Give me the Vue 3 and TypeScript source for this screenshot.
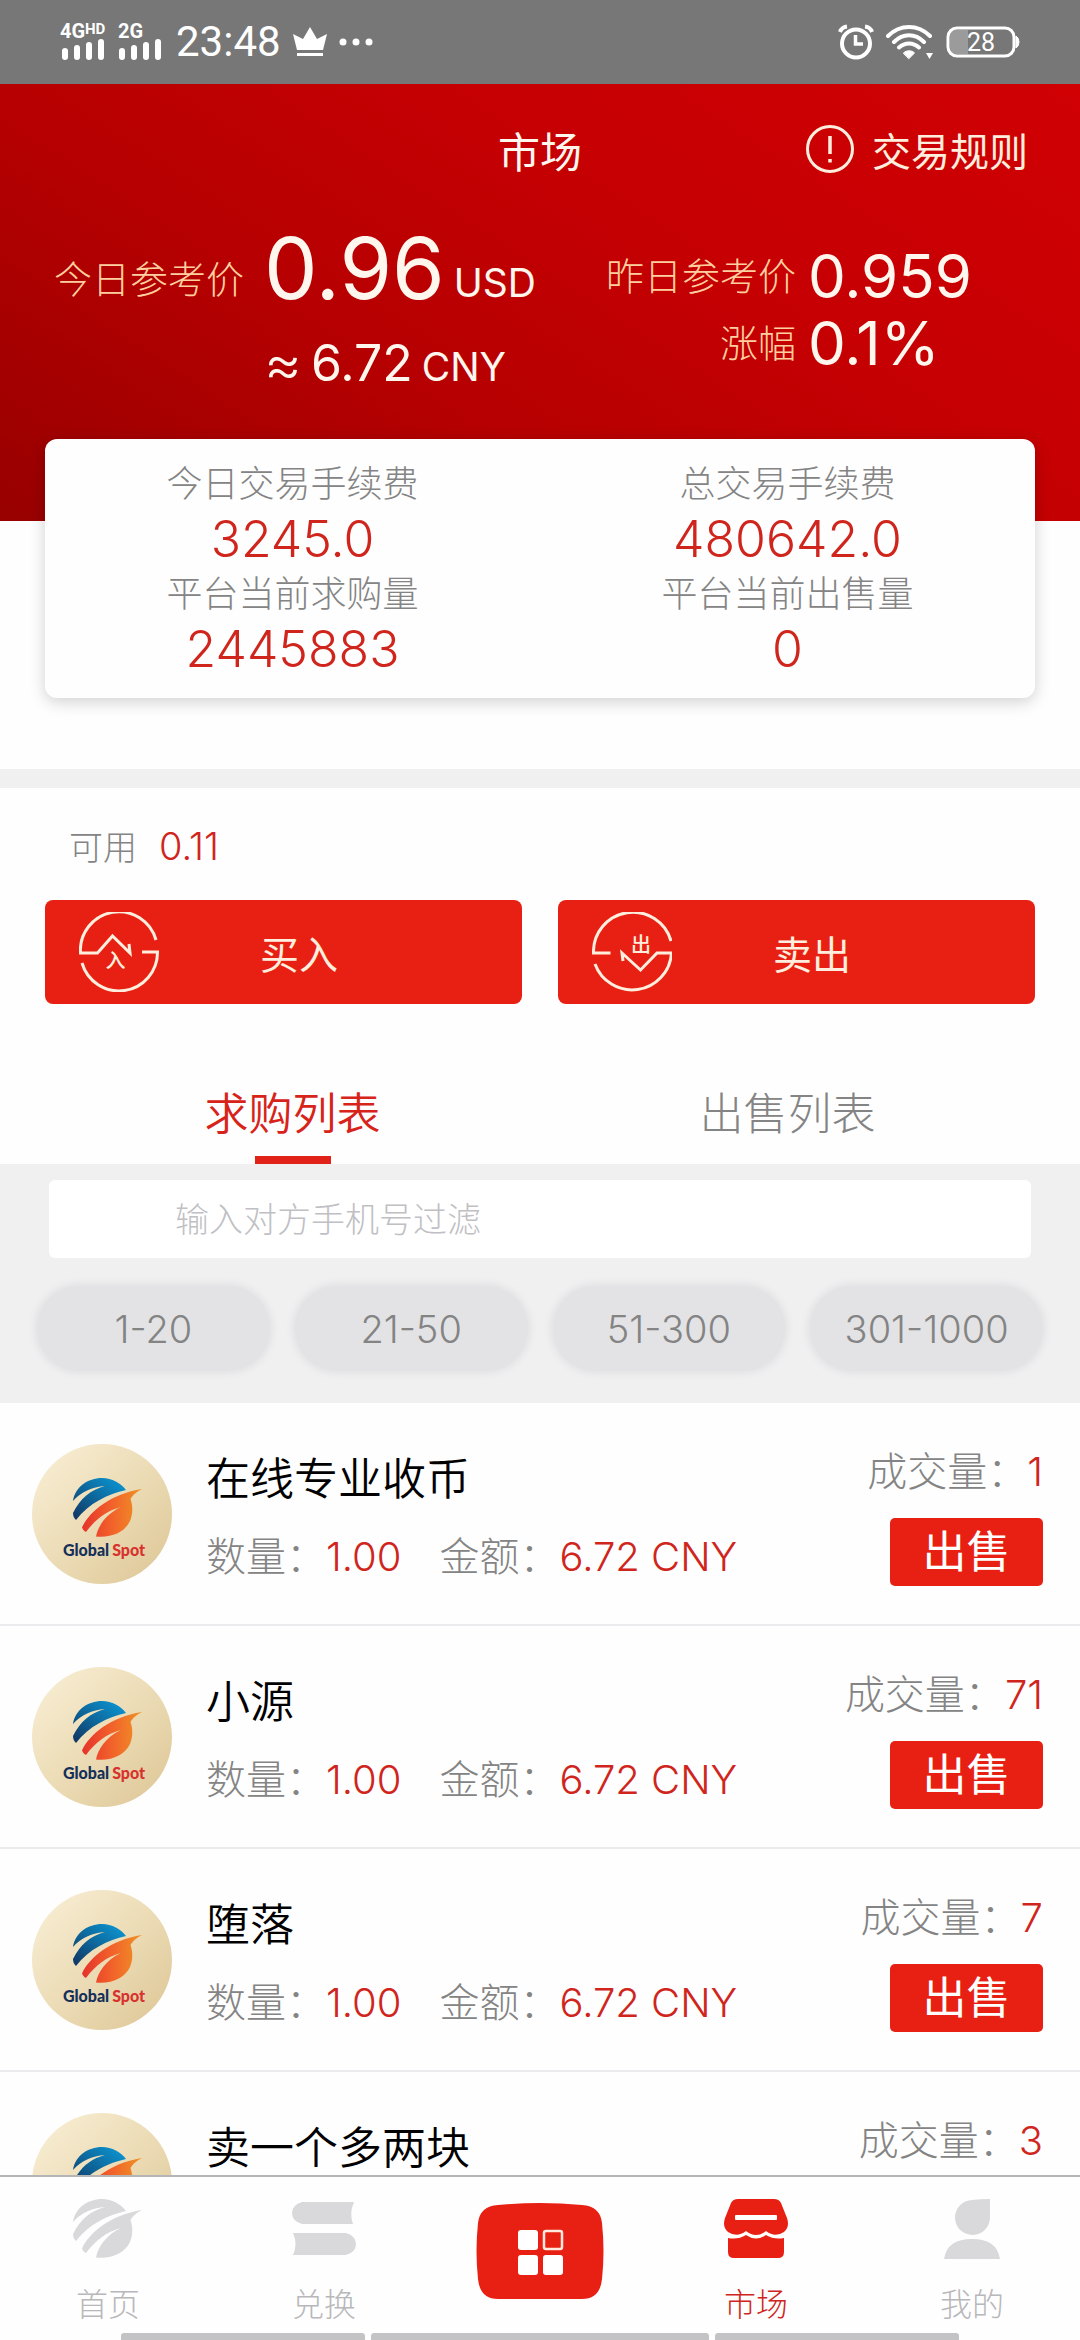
<script setup lang="ts">
import { ref } from 'vue'

interface Offer {
  name: string
  amount: string
  total: string
  deals: number
}

interface Stat {
  label: string
  value: string
}

const stats: Stat[] = [
  { label: '今日交易手续费', value: '3245.0' },
  { label: '总交易手续费', value: '480642.0' },
  { label: '平台当前求购量', value: '2445883' },
  { label: '平台当前出售量', value: '0' },
]

const ranges: string[] = ['1-20', '21-50', '51-300', '301-1000']

const offers: Offer[] = [
  { name: '在线专业收币', amount: '1.00', total: '6.72 CNY', deals: 1 },
  { name: '小源', amount: '1.00', total: '6.72 CNY', deals: 71 },
  { name: '堕落', amount: '1.00', total: '6.72 CNY', deals: 7 },
  { name: '卖一个多两块', amount: '1.00', total: '6.72 CNY', deals: 3 },
]

const lists: string[] = ['求购列表', '出售列表']
const activeList = ref(0)
const phone = ref('')

const globeTop =
  'M41 57C43 43 56 34 70 34C80 34 89 39 94 46C76 50 57 59 44 76C42 74 41 72 41 69C48 55 58 46 73 42C60 43 49 48 41 57Z'
const globeBottom =
  'M110 45C104 48 101 51 98.5 55C101 62 101 70 98 77C93 88 80 94 64 92.5C66 82 74 70 89 63C74 67 64 75 54 88C52 87 51 86 50 83.5C57 68 78 50 110 45Z'
</script>

<template>
  <div class="app">
    <div class="status">
      <svg class="signal" width="104" height="54" viewBox="0 -8 104 54" fill="#fff" aria-hidden="true">
        <text x="0" y="15" class="net">4G</text>
        <text x="25" y="11" class="net-hd">HD</text>
        <text x="58" y="15" class="net">2G</text>
        <rect x="2" y="25" width="6" height="12" rx="3" />
        <rect x="14" y="22" width="6" height="15" rx="3" />
        <rect x="26" y="19" width="6" height="18" rx="3" />
        <rect x="38" y="16" width="6" height="21" rx="3" />
        <rect x="59" y="25" width="6" height="12" rx="3" />
        <rect x="71" y="22" width="6" height="15" rx="3" />
        <rect x="83" y="19" width="6" height="18" rx="3" />
        <rect x="95" y="16" width="6" height="21" rx="3" />
      </svg>
      <span class="time">23:48</span>
      <svg width="34" height="30" viewBox="0 0 34 30" fill="#fff" aria-hidden="true">
        <path d="M0 7L10 12L17 0L24 12L34 7L30 23H4Z" />
        <rect x="4" y="26" width="26" height="3" />
      </svg>
      <svg width="34" height="8" viewBox="0 0 34 8" fill="#fff" aria-hidden="true">
        <circle cx="4" cy="4" r="3.5" />
        <circle cx="17" cy="4" r="3.5" />
        <circle cx="30" cy="4" r="3.5" />
      </svg>
      <div class="status-right">
        <svg width="36" height="36" viewBox="0 0 36 36" fill="none" stroke="#fff" aria-hidden="true">
          <circle cx="18" cy="19.500" r="14" stroke-width="4" />
          <path d="M17.500 11V20H25" stroke-width="3.500" />
          <path d="M2 8C3 5 5 3 9 2.500M34 8C33 5 31 3 27 2.500" stroke-width="4" />
        </svg>
        <svg width="48" height="36" viewBox="0 0 48 36" fill="none" stroke="#fff" stroke-width="4" stroke-linecap="round" aria-hidden="true">
          <path d="M2 12C14 0 32 0 44 12M8 18C17 9 29 9 38 18M13 23.500C19 18 27 18 33 23.500" />
          <path d="M17.500 29C20 26 26 26 28.500 29L23 34.500Z" fill="#fff" stroke-width="1" />
          <path d="M40 29H47L43.500 35Z" fill="#fff" stroke="none" />
        </svg>
        <svg width="74" height="32" viewBox="0 0 74 32" aria-hidden="true">
          <path d="M9 4H22V28H9Q4 28 4 22V10Q4 4 9 4Z" fill="#9b9b9b" />
          <rect x="2" y="2" width="66" height="28" rx="9" fill="none" stroke="#fff" stroke-width="3" />
          <path d="M70 10Q73 12 73 16Q73 20 70 22Z" fill="#fff" stroke="#fff" />
          <text x="35" y="25" text-anchor="middle" class="battery">28</text>
        </svg>
      </div>
    </div>

    <main class="page">
      <header class="hero">
        <div class="title-bar">
          <h1 class="title">市场</h1>
          <a class="rules" href="#rules">
            <svg width="48" height="48" viewBox="0 0 48 48" fill="none" stroke="#ffeedd" aria-hidden="true">
              <circle cx="24" cy="24" r="22.500" stroke-width="3" />
              <path d="M24 11V29M24 34V37.500" stroke-width="3.500" />
            </svg>
            <span>交易规则</span>
          </a>
        </div>
        <div class="prices">
          <div class="today">
            <span class="price-label today-label">今日参考价</span>
            <span class="today-line"><span class="big">0.96</span><span class="unit">USD</span></span>
            <span class="today-cny"><span class="approx">≈</span><span class="mid">6.72</span><span class="unit">CNY</span></span>
          </div>
          <div class="yesterday">
            <span class="price-label">昨日参考价</span>
            <span class="rate">0.959</span>
            <span class="price-label">涨幅</span>
            <span class="rate">0.1%</span>
          </div>
        </div>
      </header>

      <section class="stats">
        <div v-for="stat in stats" :key="stat.label" class="stat">
          <span class="stat-label">{{ stat.label }}</span>
          <span class="stat-value">{{ stat.value }}</span>
        </div>
      </section>

      <section class="trade">
        <p class="available">可用<span class="available-value">0.11</span></p>
        <div class="actions">
          <button type="button" class="action">
            <svg width="80" height="80" viewBox="0 0 80 80" fill="none" stroke="#ffeedd" stroke-width="3" aria-hidden="true">
              <path d="M77 28A38.500 38.500 0 0 0 1.500 41H18.500L33.500 24L51 41L50 32" />
              <path d="M63 40H78.500A38.500 38.500 0 0 1 3 51" />
              <text x="36.500" y="56" text-anchor="middle" class="glyph">入</text>
            </svg>
            <span>买入</span>
          </button>
          <button type="button" class="action">
            <svg width="80" height="80" viewBox="0 0 80 80" fill="none" stroke="#ffeedd" stroke-width="3" aria-hidden="true">
              <path d="M79 29A39.500 39.500 0 0 0 1.500 41H18.500" />
              <path d="M31 49L30 41L48.500 58L65 41H79.500A39.500 39.500 0 0 1 3 52" />
              <text x="49" y="40" text-anchor="middle" class="glyph">出</text>
            </svg>
            <span>卖出</span>
          </button>
        </div>
        <nav class="lists">
          <button
            v-for="(list, i) in lists"
            :key="list"
            type="button"
            class="list-tab"
            :class="{ active: i === activeList }"
            @click="activeList = i"
          >
            {{ list }}
          </button>
        </nav>
      </section>

      <section class="filters">
        <input v-model="phone" class="search" type="text" placeholder="输入对方手机号过滤" aria-label="输入对方手机号过滤" />
        <div class="ranges">
          <button v-for="range in ranges" :key="range" type="button" class="range">{{ range }}</button>
        </div>
      </section>

      <ul class="offers">
        <li v-for="offer in offers" :key="offer.name" class="offer">
          <svg class="avatar" width="140" height="140" viewBox="0 0 140 140" aria-hidden="true">
            <defs>
              <linearGradient id="sand" x1="0" y1="0" x2="1" y2="1">
                <stop offset="0" stop-color="#faf0d8" />
                <stop offset="0.5" stop-color="#ecdcb6" />
                <stop offset="1" stop-color="#dcc594" />
              </linearGradient>
              <linearGradient id="sea" x1="0" y1="1" x2="1" y2="0">
                <stop offset="0" stop-color="#12345f" />
                <stop offset="0.5" stop-color="#0d6a9f" />
                <stop offset="1" stop-color="#0d9bd8" />
              </linearGradient>
              <linearGradient id="fire" x1="0" y1="0.3" x2="1" y2="0.3">
                <stop offset="0" stop-color="#e5322d" />
                <stop offset="0.5" stop-color="#f2622a" />
                <stop offset="1" stop-color="#ee9426" />
              </linearGradient>
            </defs>
            <circle cx="70" cy="70" r="70" fill="url(#sand)" />
            <path :d="globeTop" fill="url(#sea)" />
            <path :d="globeBottom" fill="url(#fire)" />
            <text x="72" y="112" text-anchor="middle" class="brand">
              <tspan fill="#14305a">Global</tspan><tspan dx="3" fill="#d8322f">Spot</tspan>
            </text>
          </svg>
          <div class="info">
            <span class="name">{{ offer.name }}</span>
            <span class="terms">
              <span>数量：<span class="num">{{ offer.amount }}</span></span>
              <span>金额：<span class="num">{{ offer.total }}</span></span>
            </span>
          </div>
          <div class="side">
            <span class="deals">成交量：<span class="num">{{ offer.deals }}</span></span>
            <button type="button" class="sell">出售</button>
          </div>
        </li>
      </ul>
    </main>

    <nav class="tabbar">
      <a class="tab" href="#home">
        <svg width="70" height="60" viewBox="41 34 70 60" fill="#d9d9db" aria-hidden="true">
          <path :d="globeTop" />
          <path :d="globeBottom" />
        </svg>
        <span>首页</span>
      </a>
      <a class="tab" href="#exchange">
        <svg width="64" height="60" viewBox="0 0 64 60" fill="#d9d9db" aria-hidden="true">
          <path d="M10 3H62Q57 14 61 25H10Q0 22 0 14Q0 6 10 3Z" />
          <path d="M1 34H54Q64 37 64 45Q64 53 54 56H1Q6 45 1 34Z" />
        </svg>
        <span>兑换</span>
      </a>
      <a class="tab" href="#apps" aria-label="应用">
        <svg class="center" width="128" height="96" viewBox="0 0 128 96" aria-hidden="true">
          <path d="M22 2Q64 -2 106 2Q124 3 126 20Q129 48 126 76Q124 96 106 96H22Q4 96 2 76Q-1 48 2 20Q4 3 22 2Z" fill="#e82013" />
          <rect x="42" y="27" width="20" height="20" rx="3" fill="#fff" />
          <rect x="42" y="52" width="20" height="20" rx="3" fill="#fff" />
          <rect x="67" y="52" width="20" height="20" rx="3" fill="#fff" />
          <rect x="68" y="28" width="18" height="18" rx="2" fill="none" stroke="#ffe8de" stroke-width="2.500" />
        </svg>
      </a>
      <a class="tab current" href="#market">
        <svg width="64" height="60" viewBox="0 0 64 60" fill="#e82013" aria-hidden="true">
          <path d="M14 0H50Q55 0 57 4L63 19Q66 28 60 33Q51 39 42 32Q32 40 22 32Q13 39 4 33Q-2 28 1 19L7 4Q9 0 14 0Z" />
          <path d="M4 39Q14 41 22 36Q32 43 42 36Q50 41 60 39V53Q60 59 54 59H10Q4 59 4 53Z" />
          <rect x="11" y="16" width="42" height="5" rx="1" fill="#fff" />
        </svg>
        <span>市场</span>
      </a>
      <a class="tab" href="#me">
        <svg width="56" height="60" viewBox="0 0 56 60" fill="#d9d9db" aria-hidden="true">
          <path d="M28 1Q36 0 46 0V18A17.500 17.500 0 1 1 28 1Z" />
          <path d="M0 60Q3 40 28 40Q53 40 56 60Z" />
        </svg>
        <span>我的</span>
      </a>
      <div class="gesture" aria-hidden="true"><i></i><i class="wide"></i><i></i></div>
    </nav>
  </div>
</template>

<style>
body {
  margin: 0;
}
</style>

<style scoped>
.app {
  display: flex;
  flex-direction: column;
  height: 100vh;
  background: #fefefe;
  color: #848484;
  font-family: Inter, "Noto Sans CJK SC", sans-serif;
  font-weight: 300;
}

button,
input {
  margin: 0;
  padding: 0;
  border: 0;
  background: none;
  color: inherit;
  font: inherit;
}

a {
  color: inherit;
  text-decoration: none;
}

svg {
  display: block;
  flex: none;
}

/* Status bar */
.status {
  display: flex;
  flex: none;
  align-items: center;
  gap: 12px;
  height: 84px;
  padding: 0 60px;
  background: #777;
  color: #fff;
  font-family: Roboto, sans-serif;
}

.net {
  font: 700 20px Roboto, sans-serif;
}

.net-hd {
  font: 700 15px Roboto, sans-serif;
}

.battery {
  fill: #fff;
  font: 400 25px Roboto, sans-serif;
}

.time {
  font-size: 42px;
  font-weight: 400;
  line-height: 84px;
}

.status-right {
  display: flex;
  align-items: center;
  gap: 12px;
  margin-left: auto;
}

/* Scrolling page */
.page {
  flex: 1;
  min-height: 0;
  overflow: hidden auto;
  scrollbar-width: none;
}

.hero {
  padding-bottom: 128px;
  background: linear-gradient(33deg, #980000 0%, #b50001 35%, #c60003 65%, #d00003 100%);
  color: #fff7ee;
}

.title-bar {
  display: grid;
  grid-template-columns: 1fr auto 1fr;
  align-items: center;
  height: 130px;
  padding: 0 52px;
}

.title {
  grid-column: 2;
  margin: 0;
  font-size: 42px;
  font-weight: 400;
}

.rules {
  display: flex;
  align-items: center;
  justify-content: flex-end;
  gap: 18px;
  color: #ffeedd;
  font-size: 39px;
  font-weight: 400;
}

.prices {
  display: flex;
  align-items: flex-start;
  justify-content: space-between;
  padding: 15px 108px 0 54px;
}

.today {
  display: grid;
  grid-template-columns: auto auto;
  align-items: end;
  gap: 24px 20px;
}

.price-label {
  color: #ffcf9f;
  font-size: 38px;
  text-align: right;
}

.today-label {
  line-height: 60px;
}

.today-line,
.today-cny {
  display: flex;
  align-items: flex-end;
  gap: 9px;
  font-weight: 400;
}

.today-cny {
  grid-column: 2;
}

.big {
  font-size: 85px;
  line-height: 80px;
}

.mid {
  font-size: 50px;
  line-height: 60px;
}

.approx {
  font-size: 58px;
  font-weight: 300;
  line-height: 60px;
}

.unit {
  font-size: 39px;
  line-height: 52px;
}

.yesterday {
  display: grid;
  grid-template-columns: auto auto;
  align-items: center;
  column-gap: 12px;
  padding-top: 14px;
  line-height: 67px;
}

.rate {
  font-size: 60px;
  font-weight: 400;
}

/* Statistics card */
.stats {
  position: relative;
  display: grid;
  grid-template-columns: 1fr 1fr;
  margin: -82px 45px 71px;
  padding: 18px 0 21px;
  border-radius: 12px;
  background: #fefefe;
  box-shadow: 0 4px 16px rgba(0, 0, 0, 0.18);
}

.stat {
  display: flex;
  flex-direction: column;
  align-items: center;
  line-height: 55px;
}

.stat-label {
  font-size: 36px;
}

.stat-value {
  color: #d0251c;
  font-size: 50px;
}

/* Trading */
.trade {
  padding: 30px 45px 0;
  border-top: 19px solid #f0f0f1;
}

.available {
  margin: 0 0 24px 24px;
  font-size: 34px;
  line-height: 56px;
}

.available-value {
  margin-left: 22px;
  color: #d0251c;
  font-size: 38px;
}

.actions {
  display: grid;
  grid-template-columns: 1fr 1fr;
  gap: 36px;
}

.action {
  display: flex;
  align-items: center;
  gap: 101px;
  height: 104px;
  padding-left: 34px;
  border-radius: 8px;
  background: #e82013;
  color: #ffeedd;
  font-size: 39px;
  font-weight: 400;
}

.glyph {
  fill: #ffeedd;
  stroke: none;
  font: 500 20px "Noto Sans CJK SC", sans-serif;
}

.lists {
  display: grid;
  grid-template-columns: 1fr 1fr;
  margin-top: 68px;
}

.list-tab {
  display: flex;
  flex-direction: column;
  align-items: center;
  font-size: 44px;
  line-height: 84px;
}

.list-tab::after {
  width: 76px;
  height: 8px;
  content: "";
}

.list-tab.active {
  color: #d8231a;
  font-weight: 350;
}

.list-tab.active::after {
  background: #e02218;
}

/* Filters */
.filters {
  padding: 16px 35px 29px;
  background: #f0f0f1;
}

.search {
  display: block;
  box-sizing: border-box;
  width: calc(100% - 28px);
  height: 78px;
  margin: 0 14px 25px;
  padding: 0 126px;
  border-radius: 6px;
  background: #fff;
  font-size: 34px;
}

.search::placeholder {
  color: #c0c0c4;
  opacity: 1;
}

.ranges {
  display: grid;
  grid-template-columns: repeat(4, 1fr);
  gap: 25px;
  padding: 3px 2px;
}

.range {
  height: 85px;
  border-radius: 42px;
  background: #e3e3e5;
  box-shadow: 0 0 6px 3px #e3e3e5;
  font-size: 38px;
}

/* Offer list */
.offers {
  margin: 0;
  padding: 0;
  list-style: none;
}

.offer {
  display: flex;
  align-items: center;
  box-sizing: border-box;
  height: 223px;
  padding: 0 37px 0 32px;
  border-bottom: 2px solid #ebebed;
}

.brand {
  font: 900 16px Lato, sans-serif;
}

.info {
  display: flex;
  flex: 1;
  flex-direction: column;
  gap: 18px;
  margin-left: 34px;
  padding-top: 8px;
  line-height: 60px;
}

.name {
  color: #000;
  font-size: 44px;
  font-weight: 350;
}

.terms {
  display: flex;
  gap: 38px;
  font-size: 40px;
}

.num {
  color: #d0251c;
}

.side {
  display: flex;
  flex-direction: column;
  align-items: flex-end;
  gap: 16px;
}

.deals {
  font-size: 40px;
  line-height: 60px;
}

.sell {
  width: 153px;
  height: 68px;
  border-radius: 5px;
  background: #e82013;
  color: #fff;
  font-size: 44px;
  font-weight: 400;
  line-height: 68px;
}

/* Bottom navigation */
.tabbar {
  position: relative;
  display: grid;
  flex: none;
  grid-template-columns: repeat(5, 1fr);
  height: 163px;
  border-top: 2px solid #b5b5b7;
  background: #fefefe;
}

.tab {
  display: flex;
  flex-direction: column;
  align-items: center;
  gap: 24px;
  padding-top: 22px;
  color: #b8b8bb;
  font-size: 32px;
  line-height: 44px;
}

.current {
  color: #d0251c;
}

.center {
  margin-top: 4px;
}

/* System gesture hints lie over the lower edge of the bar */
.gesture {
  position: absolute;
  right: 0;
  bottom: 0;
  left: 0;
  display: flex;
  justify-content: center;
  gap: 6px;
}

.gesture i {
  width: 244px;
  height: 7px;
  border-radius: 3px 3px 0 0;
  background: #c3c3c5;
}

.gesture .wide {
  width: 338px;
}
</style>
